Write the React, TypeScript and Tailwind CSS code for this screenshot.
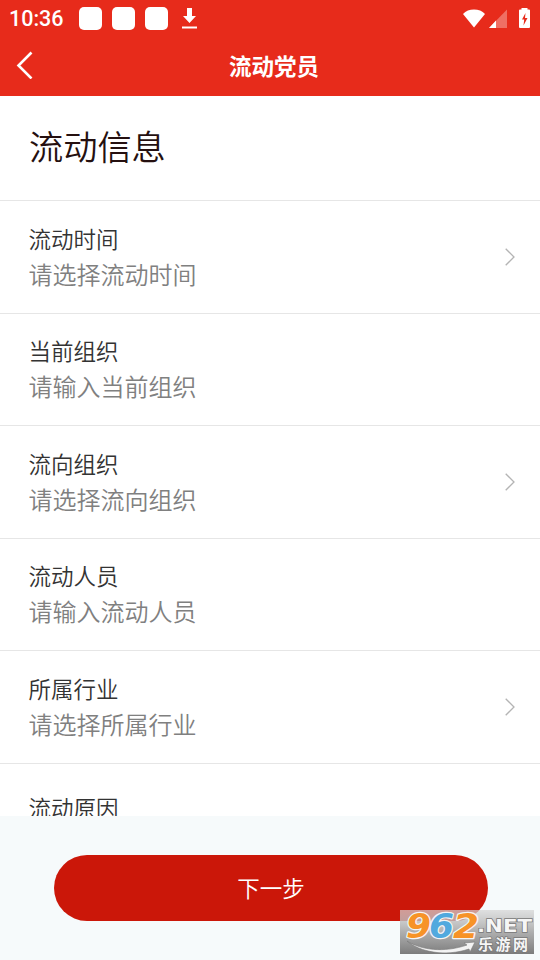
import type { ReactNode } from 'react'

type Field = {
  label: string
  placeholder: string
  select: boolean
}

const fields: Field[] = [
  { label: '流动时间', placeholder: '请选择流动时间', select: true },
  { label: '当前组织', placeholder: '请输入当前组织', select: false },
  { label: '流向组织', placeholder: '请选择流向组织', select: true },
  { label: '流动人员', placeholder: '请输入流动人员', select: false },
  { label: '所属行业', placeholder: '请选择所属行业', select: true },
]

function StatusBar() {
  return (
    <div className="flex h-9 items-center pl-[9px] pr-[10px] text-white">
      <span className="w-[70px] pt-[2px] font-[Roboto] text-[21.5px] leading-none font-medium">10:36</span>
      <div className="flex gap-[10px]">
        <span className="h-[23px] w-[23px] rounded-[5px] bg-white" />
        <span className="h-[23px] w-[23px] rounded-[5px] bg-white" />
        <span className="h-[23px] w-[23px] rounded-[5px] bg-white" />
      </div>
      <svg className="ml-[14px]" width="15" height="21" viewBox="0 0 15 21" fill="currentColor">
        <path d="M5 0h5v8h4L7.500 15 1 8h4z" />
        <path d="M0 18.500h15v2H0z" />
      </svg>
      <div className="ml-auto flex items-center">
        <svg width="22" height="19" viewBox="0 0 22 19" fill="currentColor">
          <path d="M11 18.500 0 5C2.800 1.900 6.600.500 11 .500s8.200 1.400 11 4.500z" />
        </svg>
        <svg className="ml-1" width="18" height="19" viewBox="0 0 18 19" fill="currentColor">
          <path d="M18 .500V19H0z" opacity=".32" />
          <path d="M7 11.500V19H0z" />
        </svg>
        <svg className="ml-[12px]" width="11" height="20" viewBox="0 0 11 20">
          <path d="M2.500 0h6v1.500H10q1 0 1 1V19q0 1-1 1H1q-1 0-1-1V2.500q0-1 1-1h1.500z" fill="white" />
          <path d="M6.500 5 3 11.500h2.200L4.500 17.500 8.500 10H6z" fill="#e72b1b" />
        </svg>
      </div>
    </div>
  )
}

function NavBar({ title }: { title: string }) {
  return (
    <div className="grid h-[59px] grid-cols-[60px_1fr_60px] items-center text-white">
      <button type="button" className="pb-[2px] pl-4" aria-label="返回">
        <svg width="18" height="28" viewBox="0 0 18 28" fill="none" stroke="currentColor" strokeWidth="2.6">
          <path d="M15.500 1.500 2.500 14.500l13 13" />
        </svg>
      </button>
      <h1 className="pl-[8px] text-center text-[22.5px] leading-none font-bold">{title}</h1>
    </div>
  )
}

function Row({ children }: { children: ReactNode }) {
  return (
    <li className="flex h-[112.5px] items-center justify-between border-b border-[#e6e6e6] pr-[25.5px] pl-[28.5px]">
      {children}
    </li>
  )
}

function FieldRow({ field }: { field: Field }) {
  return (
    <Row>
      <div className="pb-[2px] font-[350]">
        <div className="text-[22.5px] leading-9 text-[#333]">{field.label}</div>
        <div className="text-[24px] leading-9 text-[#808080]">{field.placeholder}</div>
      </div>
      {field.select && (
        <svg width="10" height="18" viewBox="0 0 10 18" fill="none" stroke="#b4b4b4" strokeWidth="1.3">
          <path d="m.7.700 8.300 8.300-8.300 8.300" />
        </svg>
      )}
    </Row>
  )
}

function Watermark() {
  return (
    <svg className="absolute top-[910px] left-[400px]" width="134" height="44" viewBox="0 0 134 44">
      <defs>
        <linearGradient id="plate" x1="0" y1="0" x2="0" y2="1">
          <stop offset="0" stopColor="#d4d4d4" stopOpacity=".7" />
          <stop offset=".5" stopColor="#a8a8a8" stopOpacity=".92" />
          <stop offset="1" stopColor="#7c7c7c" />
        </linearGradient>
      </defs>
      <path d="M0 0h134v44H0z" fill="url(#plate)" />
      <g
        fontFamily="'DejaVu Sans', sans-serif"
        fontSize="33"
        fontWeight="700"
        fontStyle="italic"
        stroke="#f4f4f4"
        strokeWidth="2.4"
        strokeLinejoin="round"
        style={{ paintOrder: 'stroke' }}
      >
        <text x="6" y="28" fill="#f79327" textLength="25" lengthAdjust="spacingAndGlyphs">9</text>
        <text x="29" y="28" fill="#51a9de" textLength="25" lengthAdjust="spacingAndGlyphs">6</text>
        <text x="53" y="28" fill="#f79327" textLength="26" lengthAdjust="spacingAndGlyphs">2</text>
      </g>
      <path
        d="M7 31c14 9 37 12 60 4l-3-2 11-1-5 10-1-3C45 47 20 42 7 31z"
        fill="#f3f3f3"
        stroke="#777"
        strokeWidth=".6"
      />
      <g fill="#f6f6f6" stroke="#777" strokeWidth="1.4" style={{ paintOrder: 'stroke' }}>
        <text
          x="77"
          y="22"
          fontFamily="'DejaVu Sans', sans-serif"
          fontSize="18.500"
          fontWeight="700"
          textLength="55"
          lengthAdjust="spacingAndGlyphs"
        >
          .NET
        </text>
        <text x="78" y="39.500" fontFamily="'Noto Sans CJK SC', sans-serif" fontSize="15" fontWeight="700" textLength="50">
          乐游网
        </text>
      </g>
    </svg>
  )
}

export default function App() {
  return (
    <div className="relative flex h-[960px] w-[540px] flex-col overflow-hidden bg-white font-['Noto_Sans_CJK_SC',sans-serif]">
      <header className="h-24 shrink-0 bg-[#e72b1b]">
        <StatusBar />
        <NavBar title="流动党员" />
      </header>

      <main className="h-[720px] shrink-0 overflow-hidden">
        <h2 className="h-[105px] border-b border-[#e6e6e6] pt-[24px] pl-[29px] text-[34.2px] leading-[50px] font-[350] text-[#251010]">
          流动信息
        </h2>
        <ul>
          {fields.map((field) => (
            <FieldRow key={field.label} field={field} />
          ))}
          <Row>
            <div className="pb-[24px] text-[22.5px] leading-9 font-[350] text-[#333]">流动原因</div>
          </Row>
        </ul>
      </main>

      <footer className="flex-1 bg-[#f6fafb] px-[54px] pt-[39px]">
        <button
          type="button"
          className="h-[66px] w-[434px] rounded-full bg-[#cb1709] text-[22.5px] font-[350] text-white"
        >
          下一步
        </button>
      </footer>

      <Watermark />
    </div>
  )
}
